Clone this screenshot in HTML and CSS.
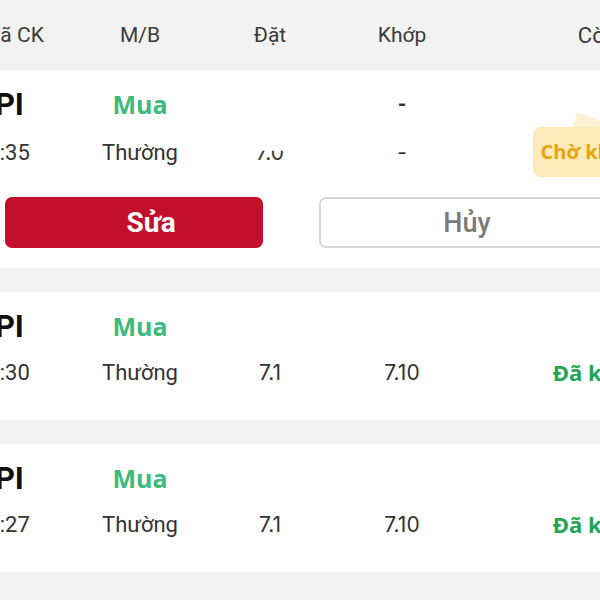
FILE: index.html
```html
<!DOCTYPE html>
<html>

<head>
    <meta charset="utf-8">
    <link rel="stylesheet" href="styles.css">
</head>

<body>
    <div class="orders">
        <div class="cols head">
            <span class="c1">Mã CK</span>
            <span>M/B</span>
            <span>Đặt</span>
            <span>Khớp</span>
            <span class="c5">Còn lại</span>
        </div>

        <div class="order">
            <div class="cols top_row">
                <span class="c1 code">HPI</span>
                <span class="side">Mua</span>
                <span></span>
                <span class="dash">-</span>
                <span class="c5"></span>
            </div>
            <div class="cols sub_row">
                <span class="c1 time">10:35</span>
                <span>Thường</span>
                <span class="num cut">7.0</span>
                <span class="num">-</span>
                <span class="c5"><span class="badge">Chờ khớp</span></span>
            </div>
            <div class="actions">
                <button class="base_button edit_button">Sửa</button>
                <button class="base_button cancel_button">Hủy</button>
            </div>
        </div>

        <div class="order">
            <div class="cols top_row">
                <span class="c1 code">HPI</span>
                <span class="side">Mua</span>
                <span></span>
                <span></span>
                <span class="c5"></span>
            </div>
            <div class="cols sub_row">
                <span class="c1 time">10:30</span>
                <span>Thường</span>
                <span class="num">7.1</span>
                <span class="num">7.10</span>
                <span class="c5 done">Đã khớp</span>
            </div>
        </div>

        <div class="order">
            <div class="cols top_row">
                <span class="c1 code">HPI</span>
                <span class="side">Mua</span>
                <span></span>
                <span></span>
                <span class="c5"></span>
            </div>
            <div class="cols sub_row">
                <span class="c1 time">10:27</span>
                <span>Thường</span>
                <span class="num">7.1</span>
                <span class="num">7.10</span>
                <span class="c5 done">Đã khớp</span>
            </div>
        </div>
    </div>
</body>

</html>
```

FILE: styles.css
```css
body {
    margin: 0;
    background: #f2f2f2;
    font-family: Roboto, "Liberation Sans", sans-serif;
    color: #333333;
    overflow: hidden;
}

.orders {
    width: 663px;
    margin-left: -18px;
}

.cols {
    display: grid;
    grid-template-columns: 108px 100px 160px 104px 191px;
    align-items: center;
    font-size: 22px;
}

.cols > span {
    text-align: center;
    white-space: nowrap;
}

.cols > .c1 {
    text-align: left;
}

.cols > .c5 {
    text-align: right;
}

.head {
    height: 70px;
    color: #3a3a3a;
    font-size: 21px;
}

.head .c5 {
    font-size: 22px;
}

.order {
    background: white;
    padding-top: 11px;
    padding-bottom: 25px;
    margin-bottom: 24px;
}

.top_row,
.sub_row {
    height: 46px;
}

.code {
    font-weight: 700;
    font-size: 31px;
    color: #111111;
    margin-left: -9px;
}

.time {
    margin-left: -7px;
}

.num {
    font-family: Inter, Roboto, sans-serif;
    font-size: 21px;
}

.side {
    font-family: "Open Sans", "Noto Sans", sans-serif;
    font-weight: 700;
    font-size: 25px;
    color: #3dba7c;
}

.dash {
    font-weight: 700;
}

.cut {
    clip-path: inset(45% 0 0 0);
}

.badge {
    display: inline-block;
    position: relative;
    padding: 0 8px;
    height: 50px;
    line-height: 50px;
    border-radius: 8px;
    background: #fde9b9;
    color: #e5a508;
    font-family: "Open Sans", "Noto Sans", sans-serif;
    font-weight: 700;
    font-size: 20px;
}

.badge::before {
    content: "";
    position: absolute;
    left: 40px;
    top: -15px;
    border-left: 4px solid transparent;
    border-right: 40px solid transparent;
    border-bottom: 15px solid #fdf1d3;
}

.done {
    font-family: "Open Sans", "Noto Sans", sans-serif;
    font-weight: 700;
    font-size: 22px;
    color: #22a457;
}

.actions {
    display: flex;
    gap: 56px;
    padding-left: 23px;
    margin-top: 24px;
    margin-bottom: -5px;
}

.base_button {
    height: 51px;
    border-radius: 7px;
    font-family: Roboto, "Liberation Sans", sans-serif;
    font-weight: 700;
    font-size: 28px;
}

.edit_button {
    width: 258px;
    padding-left: 40px;
    border: none;
    background: #c10f2c;
    color: white;
}

.cancel_button {
    width: 296px;
    border: 2px solid #d8d8d8;
    background: white;
    color: #7a7a7a;
    font-weight: 500;
    font-size: 27px;
}
```
